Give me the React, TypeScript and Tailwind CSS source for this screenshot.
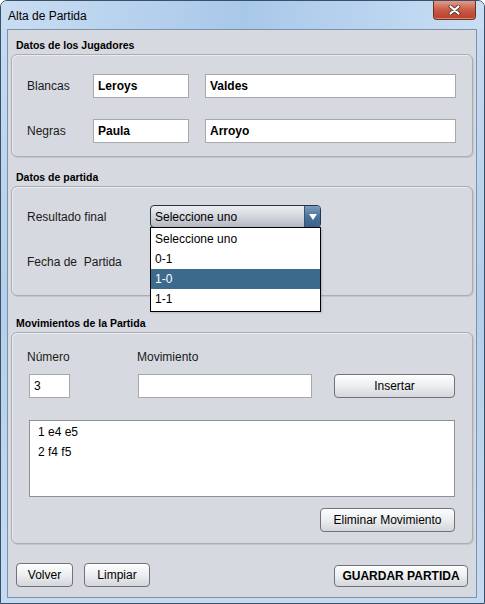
import React from 'react';

const font = { fontFamily: '"Liberation Sans", Arial, sans-serif' };

function Field({ value, bold, className }: { value?: string; bold?: boolean; className: string }) {
  return (
    <div
      className={`h-[24px] border border-[#a7a9ae] bg-white px-[4px] flex items-center text-[12px] text-black ${
        bold ? 'font-bold' : ''
      } ${className}`}
    >
      {value}
    </div>
  );
}

function Btn({ children, className }: { children: React.ReactNode; className: string }) {
  return (
    <button
      className={`flex items-center justify-center rounded-[4px] border border-[#6f7379] bg-gradient-to-b from-[#fdfdfd] via-[#eceef0] to-[#d3d6da] text-[12px] text-black shadow-[inset_0_1px_0_#ffffff] ${className}`}
    >
      {children}
    </button>
  );
}

function Heading({ children, className = '' }: { children: React.ReactNode; className?: string }) {
  return (
    <div className={`h-[24px] pl-[5px] pt-[9px] text-[10.5px] leading-[12px] font-bold text-black ${className}`}>
      {children}
    </div>
  );
}

function Group({ children, className }: { children: React.ReactNode; className: string }) {
  return (
    <div
      className={`relative rounded-[6px] border border-[#a9adb4] bg-[#d6d9df] shadow-[inset_1px_1px_0_#e9ebee,1px_1px_0_#c3c6cc] ${className}`}
    >
      {children}
    </div>
  );
}

export default function App() {
  return (
    <div
      style={font}
      className="w-[485px] h-[604px] overflow-hidden rounded-t-[7px] border border-[#3b4f66] bg-gradient-to-b from-[#c7dcf1] via-[#b4cfeb] to-[#c5dbf1] flex flex-col"
    >
      {/* Title bar */}
      <div className="h-[28px] flex items-start justify-between bg-gradient-to-r from-[#c9ddf2] via-[#a8c8ea] to-[#c9def3]">
        <div className="pl-[7px] pt-[8px] text-[12px] leading-[14px] text-black">Alta de Partida</div>
        <div className="mr-[8px] w-[43px] h-[19px] rounded-b-[4px] border border-t-0 border-[#6a3128] bg-gradient-to-b from-[#e29a8c] via-[#c95a45] to-[#b7412b] flex items-center justify-center shadow-[inset_0_-1px_0_#e2866f]">
          <svg width="13" height="10" viewBox="0 0 13 10">
            <path d="M2.5 1.5 L10.5 8.5 M10.5 1.5 L2.5 8.5" stroke="#5a3a34" strokeWidth="4" strokeLinecap="round" />
            <path d="M2.5 1.5 L10.5 8.5 M10.5 1.5 L2.5 8.5" stroke="#ffffff" strokeWidth="2.2" strokeLinecap="round" />
          </svg>
        </div>
      </div>

      {/* Content */}
      <div className="ml-[6px] w-[470px] h-[569px] border border-[#7f91a8] bg-[#d6d9df] px-[3px] flex flex-col">
        <Heading>Datos de los Jugadores</Heading>
        <Group className="h-[103px] w-[462px]">
          <div className="flex items-center pt-[19px] h-[43px]">
            <span className="w-[81px] pl-[15px] text-[12px] text-[#1a1a1a]">Blancas</span>
            <Field value="Leroys" bold className="w-[96px]" />
            <Field value="Valdes" bold className="ml-[16px] w-[251px]" />
          </div>
          <div className="flex items-center mt-[21px] h-[24px]">
            <span className="w-[81px] pl-[15px] text-[12px] text-[#1a1a1a]">Negras</span>
            <Field value="Paula" bold className="w-[96px]" />
            <Field value="Arroyo" bold className="ml-[16px] w-[251px]" />
          </div>
        </Group>

        <Heading className="mt-[5px]">Datos de partida</Heading>
        <Group className="h-[110px] w-[462px] z-10">
          <div className="flex items-center pt-[18px]">
            <span className="w-[138px] pl-[15px] text-[12px] text-[#1a1a1a]">Resultado final</span>
            <div className="relative">
              <div className="w-[171px] h-[23px] rounded-[4px] border border-[#26364a] bg-gradient-to-b from-[#eceef1] via-[#d3d6dc] to-[#b3b8c1] flex items-center overflow-hidden">
                <span className="flex-1 pl-[4px] text-[12px] text-black">Seleccione uno</span>
                <div className="w-[16px] h-full border-l border-[#3c5470] bg-gradient-to-b from-[#7d9dbf] via-[#4b7299] to-[#3a6189] flex items-center justify-center">
                  <svg width="8" height="6" viewBox="0 0 8 6">
                    <path d="M0 0 L8 0 L4 6 Z" fill="#ffffff" />
                  </svg>
                </div>
              </div>
              <div className="absolute left-0 top-[22px] w-[171px] border border-black bg-white pt-[1px] pb-[2px] shadow-[1px_1px_2px_rgba(0,0,0,0.15)]">
                {['Seleccione uno', '0-1', '1-0', '1-1'].map((o) => (
                  <div
                    key={o}
                    className={`h-[20px] pl-[4px] flex items-center text-[12px] ${
                      o === '1-0' ? 'bg-[#3c6a8c] text-white' : 'text-black'
                    }`}
                  >
                    {o}
                  </div>
                ))}
              </div>
            </div>
          </div>
          <div className="pl-[15px] mt-[25px] text-[12px] text-[#1a1a1a]">
            Fecha de&nbsp; Partida
          </div>
        </Group>

        <Heading className="mt-[12px]">Movimientos de la Partida</Heading>
        <Group className="h-[212px] w-[462px]">
          <div className="flex pt-[15px] text-[12px] text-[#1a1a1a] h-[32px] items-center">
            <span className="w-[125px] pl-[15px]">Número</span>
            <span>Movimiento</span>
          </div>
          <div className="flex items-center mt-[9px]">
            <Field value="3" className="ml-[17px] w-[41px]" />
            <Field className="ml-[68px] w-[174px]" />
            <Btn className="ml-[22px] w-[121px] h-[24px]">Insertar</Btn>
          </div>
          <div className="ml-[17px] mt-[22px] w-[426px] h-[77px] border border-[#8d9096] bg-white pl-[8px] pt-[1px] text-[12px] leading-[20px] text-black">
            <div>1 e4 e5</div>
            <div>2 f4 f5</div>
          </div>
          <div className="flex justify-end pr-[17px] mt-[11px]">
            <Btn className="w-[135px] h-[24px]">Eliminar Movimiento</Btn>
          </div>
        </Group>

        <div className="flex items-end mt-[19px] px-[5px]">
          <Btn className="w-[57px] h-[24px]">Volver</Btn>
          <Btn className="ml-[11px] w-[66px] h-[24px]">Limpiar</Btn>
          <Btn className="ml-auto w-[134px] h-[22px] font-bold text-[11px]">GUARDAR PARTIDA</Btn>
        </div>
      </div>
    </div>
  );
}
